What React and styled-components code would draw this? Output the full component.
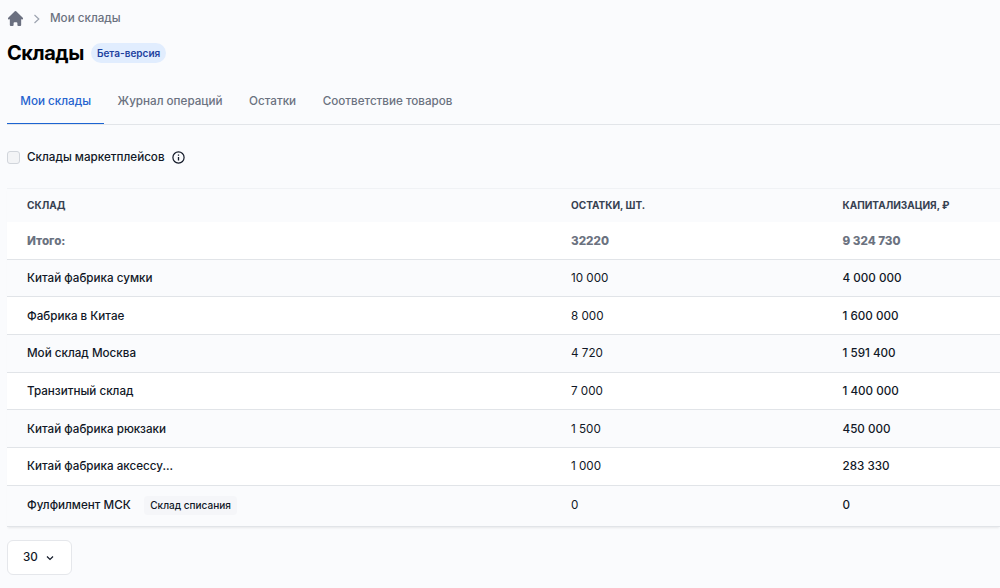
import React from 'react';
import styled, { createGlobalStyle } from 'styled-components';

const GlobalStyle = createGlobalStyle`
  * {
    box-sizing: border-box;
  }
  body {
    margin: 0;
    background-color: #fafbfd;
    color: #111827;
    font-family: Inter, 'Liberation Sans', sans-serif;
    font-size: 11.65px;
    font-weight: 500;
    overflow: hidden;
  }
`;

const Page = styled.main`
  padding-left: 7px;
  height: 588px;
  overflow: hidden;
`;

const Breadcrumbs = styled.nav`
  display: flex;
  align-items: center;
  height: 36px;
  color: #6b7280;
`;

const HomeIcon = styled.svg`
  width: 17px;
  height: 17px;
  fill: #6b7080;
`;

const Separator = styled.svg`
  width: 8px;
  height: 10px;
  margin: 1px 9px 0 9px;
  fill: none;
  stroke: #9ca3af;
`;

const Heading = styled.header`
  display: flex;
  align-items: center;
  height: 34px;
`;

const Title = styled.h1`
  margin: 0;
  color: #000;
  font-size: 20px;
  font-weight: 700;
  letter-spacing: -0.45px;
`;

const Badge = styled.span`
  display: flex;
  align-items: center;
  height: 20px;
  margin-left: 7px;
  padding: 0 6px;
  border-radius: 10px;
  background-color: #e1edfe;
  color: #1e429f;
  font-size: 10.04px;
  font-weight: 600;
`;

const Tabs = styled.div`
  display: flex;
  height: 55px;
  border-bottom: 1px solid #e2e5e9;
`;

const Tab = styled.button`
  height: 54px;
  margin: 0;
  padding: 9px 13.3px 0;
  border: 0;
  border-bottom: 1px solid ${props => (props.$active ? '#1c64d2' : 'transparent')};
  background: none;
  color: ${props => (props.$active ? '#2563cf' : '#6b7280')};
  font: inherit;
`;

const Filter = styled.label`
  display: flex;
  align-items: center;
  height: 63px;
  padding-top: 1px;
`;

const Checkbox = styled.input`
  appearance: none;
  width: 13px;
  height: 13px;
  margin: 0 7px 0 0;
  border: 1px solid #d1d5db;
  border-radius: 3px;
  background-color: #f3f4f6;
`;

const InfoIcon = styled.svg`
  width: 13px;
  height: 13px;
  margin-left: 7px;
  fill: none;
  stroke: #111827;
`;

const Table = styled.div`
  border-top: 1px solid #f0f2f5;
  box-shadow: 0 2px 2px -1px rgba(0, 0, 0, 0.08);
`;

const Row = styled.div`
  display: grid;
  grid-template-columns: 544px 271.5px 1fr;
  align-items: center;
  height: ${props => props.$height || 37.65}px;
  padding-left: 20px;
  padding-bottom: ${props => (props.$height ? 1 : 0)}px;
  border-bottom: 1px solid #e1e4e8;
  background-color: ${props => (props.$white ? '#fff' : '#fafbfd')};
`;

const HeadRow = styled(Row)`
  height: 33.2px;
  padding-bottom: 1px;
  border-bottom: 0;
  color: #374151;
  font-size: 10.04px;
  font-weight: 700;
  text-transform: uppercase;
`;

const TotalRow = styled(Row)`
  color: #6b7280;
  font-weight: 800;
`;

const Name = styled.div`
  display: flex;
  align-items: center;
`;

const Stock = styled.div`
  font-weight: 400;
`;

const Tag = styled.span`
  display: flex;
  align-items: center;
  height: 19px;
  margin-left: 13px;
  padding: 0 6.5px;
  border-radius: 4px;
  background-color: #f5f6f9;
  font-size: 10.04px;
`;

const PageSize = styled.button`
  display: flex;
  align-items: center;
  width: 65px;
  height: 35px;
  margin-top: 13px;
  padding: 0 15px 1px;
  border: 1px solid #e5e7eb;
  border-radius: 6px;
  background-color: #fff;
  color: #111827;
  font: inherit;
`;

const ArrowIcon = styled.svg`
  width: 8px;
  height: 6px;
  margin: 2px 0 0 8px;
  fill: none;
  stroke: #111827;
`;

const tabs = ['Мои склады', 'Журнал операций', 'Остатки', 'Соответствие товаров'];

const warehouses = [
  { name: 'Китай фабрика сумки', stock: '10 000', value: '4 000 000' },
  { name: 'Фабрика в Китае', stock: '8 000', value: '1 600 000' },
  { name: 'Мой склад Москва', stock: '4 720', value: '1 591 400' },
  { name: 'Транзитный склад', stock: '7 000', value: '1 400 000' },
  { name: 'Китай фабрика рюкзаки', stock: '1 500', value: '450 000' },
  { name: 'Китай фабрика аксессу...', stock: '1 000', value: '283 330' },
  { name: 'Фулфилмент МСК', stock: '0', value: '0', tag: 'Склад списания', height: 41.4 },
];

const App = () => {
  return (
    <Page>
      <GlobalStyle />
      <Breadcrumbs>
        <HomeIcon viewBox='1 1 18 18'>
          <path d='M10.707 2.293a1 1 0 00-1.414 0l-7 7a1 1 0 001.414 1.414L4 10.414V17a1 1 0 001 1h2a1 1 0 001-1v-2a1 1 0 011-1h2a1 1 0 011 1v2a1 1 0 001 1h2a1 1 0 001-1v-6.586l.293.293a1 1 0 001.414-1.414l-7-7z' />
        </HomeIcon>
        <Separator viewBox='0 0 8 10'>
          <path d='M1.5 1l4.3 4-4.3 4' strokeWidth='1.2' />
        </Separator>
        <span>Мои склады</span>
      </Breadcrumbs>
      <Heading>
        <Title>Склады</Title>
        <Badge>Бета-версия</Badge>
      </Heading>
      <Tabs>
        {tabs.map((tab, index) => (
          <Tab key={tab} $active={index === 0}>{tab}</Tab>
        ))}
      </Tabs>
      <Filter>
        <Checkbox type='checkbox' />
        Склады маркетплейсов
        <InfoIcon viewBox='0 0 13 13'>
          <circle cx='6.5' cy='6.5' r='5.6' strokeWidth='1.2' />
          <path d='M6.5 6v3.4M6.5 3.6v1.2' strokeWidth='1.3' />
        </InfoIcon>
      </Filter>
      <Table>
        <HeadRow>
          <div>Склад</div>
          <div>Остатки, шт.</div>
          <div>Капитализация, ₽</div>
        </HeadRow>
        <TotalRow $white>
          <div>Итого:</div>
          <div>32220</div>
          <div>9 324 730</div>
        </TotalRow>
        {warehouses.map((item, index) => (
          <Row key={item.name} $white={index % 2 === 1} $height={item.height}>
            <Name>
              {item.name}
              {item.tag && <Tag>{item.tag}</Tag>}
            </Name>
            <Stock>{item.stock}</Stock>
            <div>{item.value}</div>
          </Row>
        ))}
      </Table>
      <PageSize>
        30
        <ArrowIcon viewBox='0 0 8 6'>
          <path d='M1 1.5l3 3 3-3' strokeWidth='1.2' />
        </ArrowIcon>
      </PageSize>
    </Page>
  );
}

export default App;
